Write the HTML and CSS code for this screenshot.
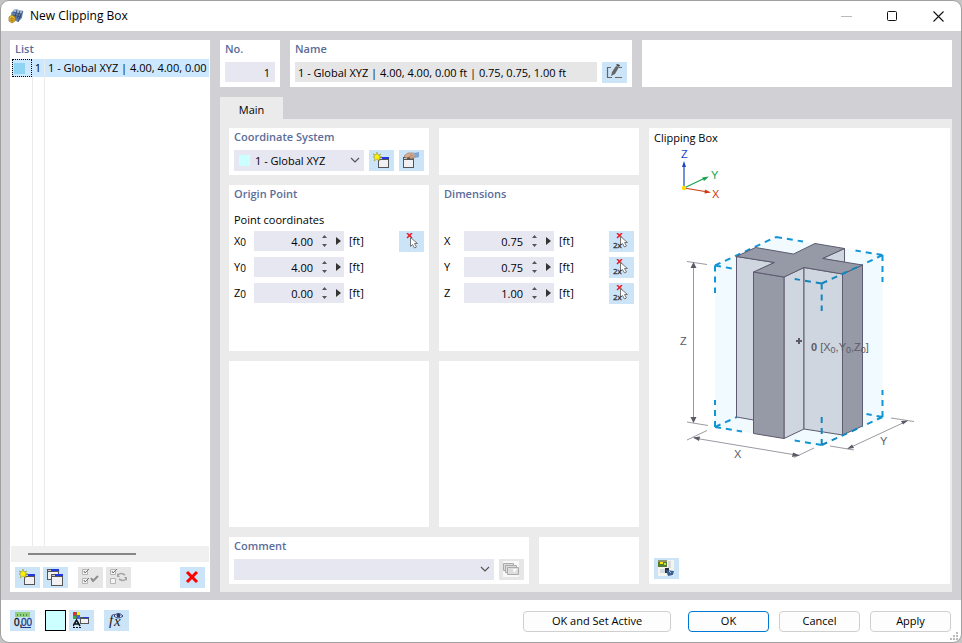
FILE: index.html
```html
<!DOCTYPE html>
<html lang="en">
<head>
<meta charset="utf-8">
<title>New Clipping Box</title>
<link rel="stylesheet" href="styles.css">
</head>
<body>
<svg class="defs" aria-hidden="true">
  <symbol id="win-new" viewBox="0 0 17 17">
    <path d="M5 5h11v11H5z" fill="#555"/><path d="M6 8h9v7H6z" fill="#f1f1f4"/><path d="M6 6h3v1H6z" fill="#ccc"/><path d="M9 5h7v2H9z" fill="#2438e0"/>
    <path d="M4 0l1 3 3-1-2 2 3 1-3 1 1 3-3-2-3 2 1-3-2-1 2-1-2-2 3 1z" fill="#fff200" stroke="#8e8a2c" stroke-width=".5"/>
  </symbol>
  <symbol id="win-copy" viewBox="0 0 17 17">
    <path d="M0 0h12v11H0z" fill="#555"/><path d="M1 3h10v7H1z" fill="#f1f1f4"/><path d="M1 1h3v1H1z" fill="#ccc"/><path d="M4 0h8v2H4z" fill="#2438e0"/>
    <path d="M4 5h12v12H4z" fill="#555"/><path d="M5 8h10v8H5z" fill="#f1f1f4"/><path d="M5 6h3v1H5z" fill="#ccc"/><path d="M8 5h8v2H8z" fill="#2438e0"/>
  </symbol>
  <symbol id="win-edit" viewBox="0 0 17 17">
    <path d="M0 5h11v11H0z" fill="#555"/><path d="M1 8h9v7H1z" fill="#f1f1f4"/><path d="M1 6h3v1H1z" fill="#ccc"/>
    <path d="M1 4l4-3h6l2 2-2 3-3 1-2-2-3 1z" fill="#d9ad91" stroke="#95705b" stroke-width=".6"/><path d="M7 3l4 1M6 4l4 2" stroke="#95705b" stroke-width=".6"/><path d="M11 1l5-1v5l-4 1z" fill="#7fa5d5"/>
  </symbol>
  <symbol id="cursor" viewBox="0 0 17 17">
    <path d="M4 0l5 5M9 0L4 5" stroke="#ed1c24" stroke-width="1.500"/>
    <path d="M7.500 4.500v9l2-2 2 3.500 2-1-2-3.500h3z" fill="#fff" stroke="#777"/>
  </symbol>
  <symbol id="cursor2" viewBox="0 0 17 17">
    <path d="M4 0l5 5M9 0L4 5" stroke="#ed1c24" stroke-width="1.500"/>
    <path d="M7.500 3.500v9l2-2 2 3.500 2-1-2-3.500h3z" fill="#fff" stroke="#777"/>
    <text x="0" y="15" font-size="8" fill="#333" stroke="#333" stroke-width=".3">2x</text>
  </symbol>
  <symbol id="chev" viewBox="0 0 10 6"><path d="M1 1l4 4 4-4" fill="none" stroke="#555" stroke-width="1.200"/></symbol>
  <symbol id="spin" viewBox="0 0 5 12"><path d="M0 3l2.500-3L5 3zM0 9h5l-2.500 3z" fill="#555"/></symbol>
  <symbol id="tri" viewBox="0 0 5 8"><path d="M0 0l5 4-5 4z" fill="#333"/></symbol>
</svg>

<div class="window">
  <header class="titlebar">
    <svg class="logo" viewBox="0 0 16 16"><path d="M3 5l4-4 8 2-1 7-4 4-6-3z" fill="#6684ad"/><path d="M7 1l8 2-2 3-8-2z" fill="#a9bddb"/><path d="M5 4l8 2-3 8M9 2L6 12M12 3l-3 8M5 7l8 2M15 3l-4 8" fill="none" stroke="#31476d" stroke-width=".8"/><path d="M1 9l3-2 3 2v4l-3 2-3-2z" fill="#f0bd2e" stroke="#8e6c18" stroke-width=".7"/><path d="M3 10h2v3H3z" fill="none" stroke="#8e6c18" stroke-width=".8"/></svg>
    <h1>New Clipping Box</h1>
    <div class="caption">
      <button aria-label="Minimize" disabled><svg viewBox="0 0 11 11"><path d="M0 5.500h11" stroke="#bbb"/></svg></button>
      <button aria-label="Maximize"><svg viewBox="0 0 11 11"><rect x=".5" y=".5" width="9" height="9" rx="1" fill="none" stroke="#111"/></svg></button>
      <button aria-label="Close"><svg viewBox="0 0 11 11"><path d="M.5.5l10 10M10.500.5l-10 10" stroke="#111" stroke-width="1.100"/></svg></button>
    </div>
  </header>

  <main class="content">
    <section class="panel list">
      <h2>List</h2>
      <div class="rows">
        <table>
          <tr><td><span class="mark"></span></td><td>1</td><td>1 - Global XYZ | 4.00, 4.00, 0.00 ft</td></tr>
        </table>
      </div>
      <div class="scroll"><span></span></div>
      <div class="tools">
        <button class="tool" aria-label="New"><svg><use href="#win-new"/></svg></button>
        <button class="tool" aria-label="Copy"><svg><use href="#win-copy"/></svg></button>
        <button class="tool off gap" aria-label="Select all" disabled><svg viewBox="0 0 17 17"><path d="M.5.5h5v5h-5zM.5 9.500h5v5h-5z" fill="#f4f4f4" stroke="#b5b5b5"/><path d="M2 2l1 2 4-4M2 11l1 2 4-4" fill="none" stroke="#777"/><path d="M9 9l2 3 5-5" fill="none" stroke="#8c8c8c" stroke-width="2"/></svg></button>
        <button class="tool off" aria-label="Invert selection" disabled><svg viewBox="0 0 17 17"><path d="M.5.5h5v5h-5zM.5 9.500h5v5h-5z" fill="#f4f4f4" stroke="#b5b5b5"/><path d="M2 2l1 2 4-4" fill="none" stroke="#777"/><path d="M8 6c3-3 5-1 7 0M16 10c-3 3-5 1-7 0" fill="none" stroke="#a5a5a5" stroke-width="1.500"/><path d="M7 4v4h3zM17 12V8h-3z" fill="#a5a5a5"/></svg></button>
        <button class="tool last" aria-label="Delete"><svg viewBox="0 0 17 17"><path d="M3 3l10 10M13 3L3 13" stroke="#f00" stroke-width="3"/></svg></button>
      </div>
    </section>

    <div class="right">
      <div class="top">
        <section class="panel no"><h2><label for="no">No.</label></h2><input id="no" class="field" value="1"></section>
        <section class="panel name"><h2><label for="name">Name</label></h2>
          <div class="line"><input id="name" class="field grey" value="1 - Global XYZ | 4.00, 4.00, 0.00 ft | 0.75, 0.75, 1.00 ft" readonly>
          <button class="tool" aria-label="Edit name"><svg viewBox="0 0 17 17"><path d="M5 3.500H1.500v10H6M9 13.500h7M13 3.500h3" fill="none" stroke="#666" stroke-width="1.200"/><path d="M5 12l1-4 4-6 3 1-4 7z" fill="#666"/><path d="M10 1l1-1 3 1-1 2z" fill="#444"/></svg></button></div>
        </section>
        <section class="panel blank"></section>
      </div>
      <div class="tabs"><button class="tab">Main</button></div>
      <div class="page">
        <div class="cols">
          <section class="panel"><h2><label for="cs">Coordinate System</label></h2>
            <div class="line">
              <div class="combo swatched"><select id="cs"><option>1 - Global XYZ</option></select><span class="swatch"></span><svg class="chev"><use href="#chev"/></svg></div>
              <button class="tool" aria-label="New coordinate system"><svg><use href="#win-new"/></svg></button>
              <button class="tool" aria-label="Edit coordinate system"><svg><use href="#win-edit"/></svg></button>
            </div>
          </section>
          <section class="panel"></section>
          <section class="panel"><h2>Origin Point</h2>
            <p class="sub">Point coordinates</p>
            <div class="grid">
              <label for="x0">X<sub>0</sub></label><div class="num"><input id="x0" value="4.00"><button aria-label="Step"><svg class="spin"><use href="#spin"/></svg></button><button aria-label="More"><svg class="tri"><use href="#tri"/></svg></button></div><span>[ft]</span><button class="tool" aria-label="Pick point"><svg><use href="#cursor"/></svg></button>
              <label for="y0">Y<sub>0</sub></label><div class="num"><input id="y0" value="4.00"><button aria-label="Step"><svg class="spin"><use href="#spin"/></svg></button><button aria-label="More"><svg class="tri"><use href="#tri"/></svg></button></div><span>[ft]</span><i></i>
              <label for="z0">Z<sub>0</sub></label><div class="num"><input id="z0" value="0.00"><button aria-label="Step"><svg class="spin"><use href="#spin"/></svg></button><button aria-label="More"><svg class="tri"><use href="#tri"/></svg></button></div><span>[ft]</span><i></i>
            </div>
          </section>
          <section class="panel"><h2>Dimensions</h2>
            <p class="sub"></p>
            <div class="grid">
              <label for="dx">X</label><div class="num"><input id="dx" value="0.75"><button aria-label="Step"><svg class="spin"><use href="#spin"/></svg></button><button aria-label="More"><svg class="tri"><use href="#tri"/></svg></button></div><span>[ft]</span><button class="tool" aria-label="Pick two points, X"><svg><use href="#cursor2"/></svg></button>
              <label for="dy">Y</label><div class="num"><input id="dy" value="0.75"><button aria-label="Step"><svg class="spin"><use href="#spin"/></svg></button><button aria-label="More"><svg class="tri"><use href="#tri"/></svg></button></div><span>[ft]</span><button class="tool" aria-label="Pick two points, Y"><svg><use href="#cursor2"/></svg></button>
              <label for="dz">Z</label><div class="num"><input id="dz" value="1.00"><button aria-label="Step"><svg class="spin"><use href="#spin"/></svg></button><button aria-label="More"><svg class="tri"><use href="#tri"/></svg></button></div><span>[ft]</span><button class="tool" aria-label="Pick two points, Z"><svg><use href="#cursor2"/></svg></button>
            </div>
          </section>
          <section class="panel"></section>
          <section class="panel"></section>
          <div class="bottom">
            <section class="panel comment"><h2><label for="cm">Comment</label></h2>
              <div class="line"><div class="combo"><select id="cm"><option></option></select><svg class="chev"><use href="#chev"/></svg></div>
              <button class="tool off" aria-label="Comment templates" disabled><svg viewBox="0 0 17 17"><path d="M0 0h16v16H0z" fill="#f8f8f8"/><g fill="#ddd" stroke="#aaa"><path d="M.5 2.500h10v7H.5z"/><path d="M2.500 4.500h11v7h-11z"/><path d="M4.500 6.500h11v7h-11z"/></g><path d="M10 8h4l-3 4z" fill="#fff"/></svg></button></div>
            </section>
            <section class="panel"></section>
          </div>
        </div>
        <section class="panel preview">
          <h3>Clipping Box</h3>
          <svg class="drawing" viewBox="654 146 290 324" role="img" aria-label="Clipping box diagram">
            <path d="M715 265.500L776 237l106.500 18v162L821.700 445 715 427z" fill="#f1fafe"/>
            <g fill="none" stroke="#1095d6" stroke-width="2" stroke-dasharray="6 5">
              <path d="M715 265.500V293M715 265.500l26 4.500M715 265.500L776 237M776 237l27 4.500M882.500 255l-27-4.500M882.500 255v27M882.500 255L862 265M715 427v-27M715 427l27 4.500M715 427l22-10M821.700 445l-27-4.500M882.500 417v-27M882.500 417l-16-3M882.500 417L862 426.500"/>
            </g>
            <g stroke="#5c5b6f" stroke-width="1" stroke-linejoin="round">
              <g fill="#d0d6df"><path d="M736.500 256.500l38 6-21 10v147.500l-17-3z"/><path d="M784 277l20-9.500V429l-20 9.500z"/><path d="M804 267.500l38.500 6.500v161L804 429z"/><path d="M822.500 258.500l22-10v14z"/></g>
              <g fill="#9699a6"><path d="M753.500 272l30.500 5v161.500l-30.500-5z"/><path d="M842.500 274l20-9v161l-20 9z"/>
              <path d="M736.500 256.500l19-9 38 6.500 21.500-10.500 29.500 5-22 10 40 6.500-20 9-38.500-6.500-20 9.500-30.500-5 21-9.500z"/></g>
            </g>
            <g fill="none" stroke="#1585bc" stroke-width="2" stroke-dasharray="6 5"><path d="M821.700 283.500V311M821.700 283.500l-27-4.500M821.700 283.500l40-18.500M821.700 445v-28M821.700 445l37-17"/></g>
            <g stroke="#9a9aa2" stroke-width="1" fill="none"><path d="M693.500 264v157M687 261.500l20 3M687 422l21 3.500M694 438l105 17.500M687 440l20-9.500M794 457.500l20-9.500M848 448.500l59-27.500M830 446l24 4M891 418l23 3.500"/></g>
            <g fill="#5b5b68"><path d="M693.500 262l3 6h-6zM693.500 423l-3-6h6zM693 437.500l7-1-1 4.500zM800 455.500l-7-3-1 4.500zM847 449l5-4.500 2 3.500zM908 420.500l-7 .500 2 3.500z"/><path d="M796 340h2v-2h2v2h2v2h-2v2h-2v-2h-2z"/></g>
            <g class="dims"><text x="680" y="345">Z</text><text x="734" y="458">X</text><text x="880" y="445">Y</text><text x="811" y="351"><tspan font-weight="bold">0</tspan> [X<tspan dy="2" font-size="9">0</tspan><tspan dy="-2">,Y</tspan><tspan dy="2" font-size="9">0</tspan><tspan dy="-2">,Z</tspan><tspan dy="2" font-size="9">0</tspan><tspan dy="-2">]</tspan></text></g>
            <path d="M684 188v-22" stroke="#1d45c4" stroke-width="1.200"/><path d="M684 161l2 6h-4z" fill="#1d45c4"/>
            <path d="M684 188l19-9" stroke="#16a34f" stroke-width="1.200"/><path d="M709 176.500l-7 1 2 3.500z" fill="#16a34f"/>
            <path d="M684 188l21 3.500" stroke="#d03a12" stroke-width="1.200"/><path d="M711 192.500l-6-3-.5 4z" fill="#d03a12"/>
            <circle cx="684" cy="188" r="2.200" fill="#ffde00"/>
            <g class="dims"><text x="681" y="158" fill="#1d45c4">Z</text><text x="711" y="179" fill="#16a34f">Y</text><text x="712" y="198" fill="#d03a12">X</text></g>
          </svg>
          <button class="tool" aria-label="Picture"><svg viewBox="0 0 17 17"><path d="M0 0h16v16H0z" fill="#f5f5ee"/><path d="M0 0h9v7H0z" fill="#527c36"/><path d="M0 0h9v2H0z" fill="#8c9470"/><path d="M2 2h3v2H2z" fill="#ffe800"/><path d="M6 3h2v2H6z" fill="#c2e04b"/><path d="M10 1h3v7h-3z" fill="#dadada"/><path d="M2 9h5v4H2z" fill="#d4dbe2"/><path d="M7 8h4v5H7z" fill="#27303c"/><path d="M8 10l8 1-1 4-5 1z" fill="#3b5f91"/><path d="M11 11l2 2" stroke="#b5cff0"/></svg></button>
        </section>
      </div>
    </div>
  </main>

  <footer class="footer">
    <button class="tool" aria-label="Units"><svg class="wide" viewBox="0 0 19 17"><path d="M2 0h15v5H2z" fill="#8fd07d"/><path d="M4.500 2v2M7.500 2v2M10.500 2v2M13.500 2v2" stroke="#508848"/><g class="units"><text x="1" y="14" fill="#111" stroke="#111">0,</text><text x="8" y="14" fill="#193f8f" stroke="#193f8f">00</text></g><path d="M8 15.500h10" stroke="#193f8f"/></svg></button>
    <button class="color" aria-label="Color"></button>
    <button class="tool" aria-label="Display"><svg viewBox="0 0 17 17"><path d="M0 0h7v7H0z" fill="#666"/><path d="M0 0h3v3H0z" fill="#f22"/><path d="M4 0h3v3H4z" fill="#fe0"/><path d="M0 4h3v3H0z" fill="#2b3"/><path d="M4 4h3v3H4z" fill="#36f"/><path d="M0 14l3.500-6L7 14M1 12h5" fill="none" stroke="#111" stroke-width="1.500"/><path d="M0 15.500h2M3 15.500h2M6 15.500h2" stroke="#111"/><path d="M7 5h9v7H7z" fill="#555"/><path d="M8 7h7v4H8z" fill="#f1f1f4"/><path d="M10 5h6v1h-6z" fill="#2438e0"/></svg></button>
    <button class="tool gap" aria-label="Formula"><svg class="wide" viewBox="0 0 19 17"><text class="fx" x="2" y="13" font-size="15">f</text><text class="fx" x="7" y="14" font-size="15">x</text><path d="M7 4q4-5 9 0-5 4-9 0z" fill="#fff" stroke="#273a75"/><circle cx="11.500" cy="3.500" r="2" fill="#273a75"/></svg></button>
    <div class="actions">
      <button class="wide-btn">OK and Set Active</button><button class="default">OK</button><button>Cancel</button><button>Apply</button>
    </div>
    <svg class="grip" viewBox="0 0 8 8"><path d="M6 0h2v2H6zM3 3h2v2H3zM6 3h2v2H6zM0 6h2v2H0zM3 6h2v2H3zM6 6h2v2H6z" fill="#bbb"/></svg>
  </footer>
</div>
</body>
</html>
```
FILE: styles.css
```css
* { box-sizing: border-box; }
html, body { height: 100%; }
body { margin: 0; background: #c4c4c4; font: 11px/16px "Open Sans", "Noto Sans", sans-serif; color: #000; }
button, input, select { font: inherit; color: inherit; margin: 0; padding: 0; border: 0; border-radius: 0; background: none; }
h1, h2, h3, p { margin: 0; font-size: 11px; font-weight: 400; }
h2 { color: #5b6d9a; font-weight: 600; line-height: 18px; }
svg { display: block; }
.defs { display: none; }

.window { height: 100%; display: flex; flex-direction: column; border: 1px solid #a0a0a0; border-radius: 9px; overflow: hidden; background: #fff; }
.titlebar { flex: none; height: 30px; display: flex; align-items: center; gap: 6px; padding-left: 7px; }
.titlebar h1 { font-size: 12px; }
.logo { width: 16px; height: 16px; }
.caption { margin-left: auto; display: flex; }
.caption button { width: 46px; height: 28px; display: grid; place-items: center; }
.caption svg { width: 11px; height: 11px; }

.content { flex: 1; min-height: 0; display: flex; gap: 10px; padding: 9px 9px 8px; background: #d0d0d5; }
.panel { background: #fff; padding: 0 5px; min-width: 0; }

.list { width: 200px; flex: none; display: flex; flex-direction: column; padding: 0 1px 4px; }
.list h2 { padding: 0 4px; height: 19px; }
.rows { flex: 1; overflow: hidden; margin-left: 1px; background: linear-gradient(#ebebeb, #ebebeb) 20px 0 / 1px 100% no-repeat, linear-gradient(#ebebeb, #ebebeb) 32px 0 / 1px 100% no-repeat; }
.rows table { width: 100%; table-layout: fixed; border-collapse: separate; border-spacing: 0; }
.rows td { height: 18px; padding: 0; background: #cce8ff; white-space: nowrap; overflow: hidden; border-right: 1px solid #ebebeb; }
.rows td:first-child { width: 20px; border: 1px dotted #000; }
.rows td:nth-child(2) { width: 13px; text-align: center; }
.rows td:last-child { padding-left: 3px; border: 0; }
.mark { display: block; width: 11px; height: 11px; margin-left: 1px; background: #8fd4f4; }
.scroll { height: 16px; background: #f0f0f0; padding: 7px 17px; margin-bottom: 5px; }
.scroll span { display: block; width: 108px; height: 2px; background: #868686; }
.tools { display: flex; gap: 3px; padding: 0 4px; }
.gap { margin-left: 7px; }
.last { margin-left: auto; }
.tool { flex: none; width: 25px; height: 21px; display: grid; place-items: center; background: #cce4f7; }
.tool svg { width: 17px; height: 17px; }
.tool .wide { width: 19px; }
.off { background: #e6e6e6; }

.right { flex: 1; min-width: 0; display: flex; flex-direction: column; }
.top { display: flex; gap: 10px; height: 47px; flex: none; }
.no { width: 60px; }
.name { width: 342px; }
.blank { flex: 1; }
.panel h2 + .field, .line { margin-top: 4px; }
.field { display: block; height: 20px; width: 100%; background: #e7e7f2; padding: 0 5px; text-align: right; }
.field.grey { flex: 1; min-width: 0; background: #e6e6e6; padding: 0 3px; text-align: left; }
.line { display: flex; gap: 5px; }
.tabs { margin-top: 10px; display: flex; }
.tab { width: 63px; height: 22px; padding-top: 4px; background: #ebebeb; }
.page { flex: 1; min-height: 0; display: flex; gap: 10px; padding: 9px 2px 8px 9px; background: #ebebeb; }
.cols { flex: none; display: grid; grid-template-columns: 200px 200px; grid-template-rows: 47px 1fr 1fr 47px; gap: 10px; }
.bottom { grid-column: span 2; display: grid; grid-template-columns: 300px 100px; gap: 10px; }
.combo { position: relative; flex: 1; height: 21px; min-width: 0; }
.combo select { appearance: none; width: 100%; height: 100%; background: #e7e7f2; padding: 0 20px 0 5px; }
.swatched select { padding-left: 21px; }
.swatch { position: absolute; left: 5px; top: 5px; width: 11px; height: 11px; background: #cff; }
.chev { position: absolute; right: 4px; top: 7px; width: 10px; height: 6px; pointer-events: none; }

.sub { height: 16px; margin: 9px 0 3px; }
.grid { display: grid; grid-template-columns: 20px 90px 1fr 25px; grid-auto-rows: 20px; row-gap: 6px; align-items: center; }
.grid > span { padding-left: 5px; }
.grid sub { font-size: 10px; line-height: 0; vertical-align: -1px; }
.num { height: 20px; display: flex; align-items: center; background: #e7e7f2; }
.num input { width: 59px; height: 20px; text-align: right; }
.num button { height: 20px; display: grid; place-items: center; width: 23px; }
.num button:last-child { width: 8px; }
.spin { width: 5px; height: 12px; }
.tri { width: 5px; height: 8px; }
.num button:last-child .tri { justify-self: start; }

.preview { flex: 1; display: flex; flex-direction: column; align-items: flex-start; padding-bottom: 5px; }
.preview h3 { height: 18px; line-height: 20px; }
.preview .tool { margin-top: auto; }
.drawing { width: 100%; max-width: 290px; aspect-ratio: 290 / 324; }
.dims { font: 11px "Liberation Sans", sans-serif; }
.dims text:not([fill]) { fill: #5b5b68; }

.footer { flex: none; height: 42px; display: flex; align-items: center; padding: 0 10px 2px 9px; position: relative; }
.color { width: 21px; height: 21px; margin: 0 3px 0 10px; border: 1px solid #000; background: #cff; }
.footer .gap { margin-left: 10px; }
.actions { margin-left: auto; display: flex; gap: 10px; padding-top: 2px; }
.actions button { width: 81px; height: 21px; border: 1px solid #d0d0d0; border-radius: 4px; background: #fdfdfd; }
.actions .wide-btn { width: 148px; margin-right: 7px; }
.actions .default { border-color: #0078d4; }
.grip { position: absolute; right: 3px; bottom: 2px; width: 8px; height: 8px; }
.units { font: 10px "Liberation Sans", sans-serif; stroke-width: .3px; }
.fx { font-family: "Liberation Serif", serif; font-style: italic; fill: #222; }
```
